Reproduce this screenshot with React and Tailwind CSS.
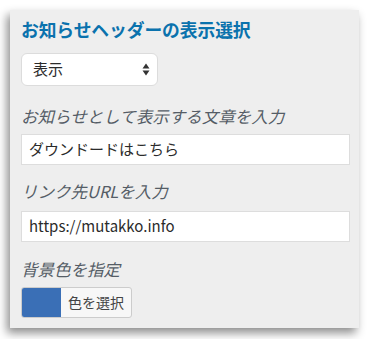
export default function App() {
  const jp = { fontFamily: '"Noto Sans CJK JP", "Noto Sans", sans-serif' }
  return (
    <div className="w-[370px] h-[339px] bg-white overflow-hidden pt-[10px] pl-[10px]" style={jp}>
      <div className="w-[349px] h-[318px] bg-[#eeeeee] px-[11px] pt-[7px] shadow-[-3px_5px_9px_rgba(0,0,0,0.45)]">
        {/* Section title */}
        <div className="text-[17.8px] leading-[24px] font-bold text-[#0a72ad] tracking-[-0.1px]">
          お知らせヘッダーの表示選択
        </div>

        {/* Select */}
        <div className="mt-[12px] w-[137px] h-[33px] bg-white rounded-[6px] border border-[#dcdcdc] flex items-center justify-between pl-[11px] pr-[7px]">
          <span className="text-[15px] text-[#2b2b2b]">表示</span>
          <svg width="8" height="13" viewBox="0 0 8 13" fill="#333">
            <path d="M4 0.5L7.5 5.5H0.5Z" />
            <path d="M4 12.5L7.5 7.5H0.5Z" />
          </svg>
        </div>

        {/* Text input */}
        <div className="mt-[18px] text-[16.5px] leading-[24px] italic text-[#555d66]">
          お知らせとして表示する文章を入力
        </div>
        <div className="mt-[6px] w-[329px] h-[31px] bg-white border border-[#dddddd] flex items-center px-[7px] text-[15px] text-[#2b2b2b]">
          ダウンドードはこちら
        </div>

        {/* URL input */}
        <div className="mt-[14px] text-[16.5px] leading-[24px] italic text-[#555d66]">
          リンク先URLを入力
        </div>
        <div className="mt-[8px] w-[329px] h-[31px] bg-white border border-[#dddddd] flex items-center px-[7px] text-[15px] text-[#2b2b2b]">
          https://mutakko.info
        </div>

        {/* Color picker */}
        <div className="mt-[15px] text-[16.5px] leading-[24px] italic text-[#555d66]">
          背景色を指定
        </div>
        <div className="mt-[6px] w-[111px] h-[31px] flex rounded-[3px] border border-[#cccccc] bg-[#f7f7f7] overflow-hidden">
          <div className="w-[39px] h-full bg-[#3a6fb6]" />
          <div className="flex-1 flex items-center justify-center text-[14px] text-[#444]">色を選択</div>
        </div>
      </div>
    </div>
  )
}
